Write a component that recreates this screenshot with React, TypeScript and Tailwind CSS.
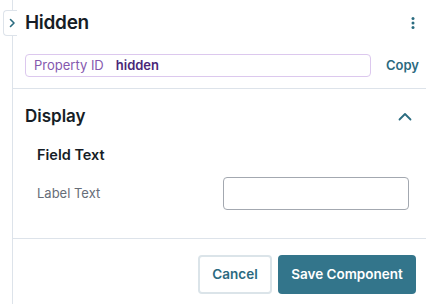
import React from "react";

export default function App() {
  return (
    <div
      className="relative w-[426px] h-[304px] overflow-hidden bg-white"
      style={{ fontFamily: "Inter, 'Noto Sans', sans-serif" }}
    >
      {/* collapse tab */}
      <div className="absolute left-[3px] top-[10px] w-[14px] h-[26px] bg-white border border-r-0 border-[#dde3ea] rounded-l-[4px] flex items-center justify-end pr-[1px] z-10">
        <svg width="8" height="10" viewBox="0 0 8 10" fill="none">
          <path d="M2.5 1.5 L6 5 L2.5 8.5" stroke="#2b6c80" strokeWidth="1.6" strokeLinecap="round" strokeLinejoin="round" />
        </svg>
      </div>

      <div className="ml-[12px] h-full border-l border-[#dde3ea] flex flex-col">
        {/* header */}
        <div className="pl-[12px]">
          <div className="h-[42px] pt-[4px] flex items-center justify-between pr-[7px]">
            <div className="text-[19px] font-semibold text-[#161d26] tracking-[-0.3px]">Hidden</div>
            <svg width="12" height="14" viewBox="0 0 12 14">
              <circle cx="6" cy="2.5" r="1.5" fill="#2b6c80" />
              <circle cx="6" cy="7" r="1.5" fill="#2b6c80" />
              <circle cx="6" cy="11.5" r="1.5" fill="#2b6c80" />
            </svg>
          </div>
          <div className="mt-[12px] flex items-center">
            <div className="w-[346px] h-[23px] border border-[#dcc8ee] rounded-[4px] flex items-center pl-[8px] text-[13px]">
              <span className="text-[#8558ae]">Property ID</span>
              <span className="ml-[12px] font-semibold text-[#4a2777]">hidden</span>
            </div>
            <span className="ml-[15px] text-[13px] font-semibold text-[#2b6a80]">Copy</span>
          </div>
        </div>
        <div className="mt-[11px] border-b border-[#dde3ea]" />

        {/* Display section */}
        <div className="pl-[12px] pr-[14px] h-[52px] pt-[3px] flex items-center justify-between">
          <div className="text-[17px] font-semibold text-[#161d26]">Display</div>
          <svg width="14" height="10" viewBox="0 0 14 10" fill="none">
            <path d="M1.5 7.5 L7 2 L12.5 7.5" stroke="#2b6c80" strokeWidth="1.8" strokeLinecap="round" strokeLinejoin="round" />
          </svg>
        </div>
        <div className="pl-[24px] pr-[17px]">
          <div className="h-[26px] pt-[1px] flex items-center text-[14.5px] font-semibold text-[#161d26]">Field Text</div>
          <div className="mt-[10px] flex items-center justify-between">
            <span className="text-[13px] text-[#666d78] pt-[1px]">Label Text</span>
            <div className="w-[186px] h-[33px] border border-[#a3a8b0] rounded-[4px]" />
          </div>
        </div>
        <div className="mt-[28px] border-b border-[#dde3ea]" />

        {/* footer */}
        <div className="mt-[16px] flex justify-end pr-[10px] gap-[6px]">
          <button className="w-[74px] h-[39px] border-2 border-[#dbe4e9] rounded-[4px] text-[13.5px] font-semibold text-[#2b6a80] bg-white">
            Cancel
          </button>
          <button className="w-[138px] h-[39px] rounded-[4px] bg-[#33758b] text-[13.5px] font-semibold text-white">
            Save Component
          </button>
        </div>
      </div>
    </div>
  );
}
